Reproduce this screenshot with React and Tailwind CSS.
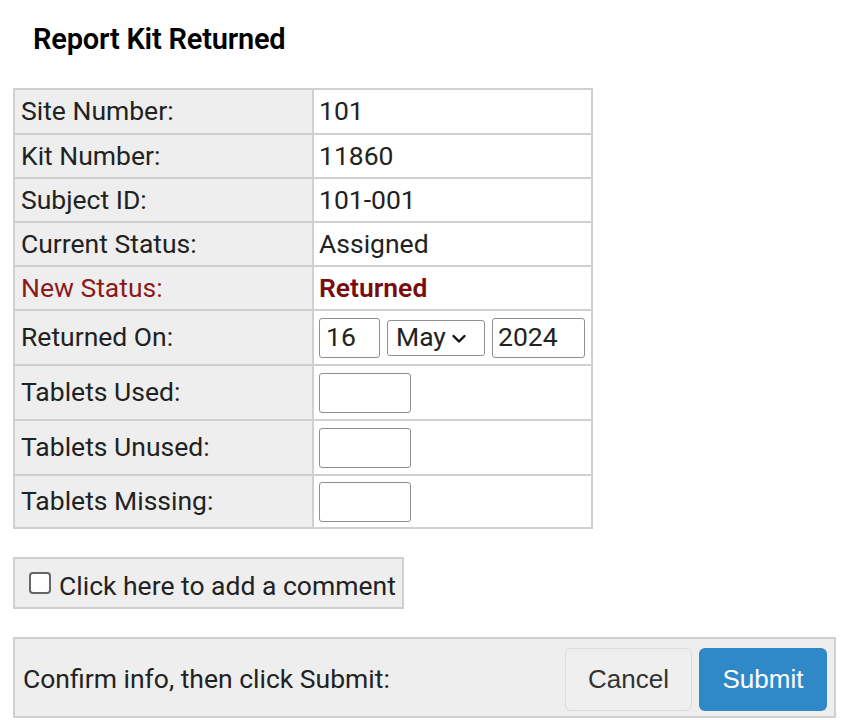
import React from "react";

const rows = [
  { label: "Site Number:", value: "101", h: "h-[45px]" },
  { label: "Kit Number:", value: "11860", h: "h-[44px]" },
  { label: "Subject ID:", value: "101-001", h: "h-[44px]" },
  { label: "Current Status:", value: "Assigned", h: "h-[44px]" },
];

function NumBox() {
  return <div className="w-[92px] h-[40px] border border-[#8f8f8f] rounded-[3px] bg-white" />;
}

export default function App() {
  return (
    <div className="w-[841px] h-[720px] bg-white overflow-hidden text-[#222] font-['Roboto',sans-serif]">
      <div className="pt-[22px] pl-[33px] text-[29px] font-semibold text-black leading-[34px] tracking-[-0.2px]">
        Report Kit Returned
      </div>
      <table className="mt-[32px] ml-[13px] w-[580px] border-collapse text-[26.5px] leading-none">
        <tbody>
          {rows.map((r) => (
            <tr key={r.label} className={r.h}>
              <td className="w-[299px] bg-[#eeeeee] border-2 border-[#d0d0d0] pl-[6px] text-[#222]">{r.label}</td>
              <td className="border-2 border-[#d0d0d0] pl-[5px] text-[#222]">{r.value}</td>
            </tr>
          ))}
          <tr className="h-[44px]">
            <td className="bg-[#eeeeee] border-2 border-[#d0d0d0] pl-[6px] text-[#8b1a1a]">New Status:</td>
            <td className="border-2 border-[#d0d0d0] pl-[5px] text-[#7a0c0c] font-semibold">Returned</td>
          </tr>
          <tr className="h-[55px]">
            <td className="bg-[#eeeeee] border-2 border-[#d0d0d0] pl-[6px]">Returned On:</td>
            <td className="border-2 border-[#d0d0d0] pl-[5px]">
              <div className="flex items-center gap-[7px]">
                <div className="w-[61px] h-[40px] border border-[#8f8f8f] rounded-[3px] flex items-center pl-[6px]">16</div>
                <div className="w-[98px] h-[36px] border border-[#8f8f8f] rounded-[3px] flex items-center pl-[8px] gap-[5px]">
                  <span>May</span>
                  <svg width="16" height="12" viewBox="0 0 16 12" className="mt-[2px]">
                    <path d="M2.5 3 L8 8.5 L13.5 3" stroke="#111" strokeWidth="2.4" fill="none" strokeLinecap="round" strokeLinejoin="round" />
                  </svg>
                </div>
                <div className="w-[93px] h-[40px] border border-[#8f8f8f] rounded-[3px] flex items-center pl-[5px]">2024</div>
              </div>
            </td>
          </tr>
          {[
            ["Tablets Used:", "h-[55px]"],
            ["Tablets Unused:", "h-[55px]"],
            ["Tablets Missing:", "h-[53px]"],
          ].map(([l, h]) => (
            <tr key={l} className={h}>
              <td className="bg-[#eeeeee] border-2 border-[#d0d0d0] pl-[6px]">{l}</td>
              <td className="border-2 border-[#d0d0d0] pl-[5px]">
                <NumBox />
              </td>
            </tr>
          ))}
        </tbody>
      </table>
      <div className="mt-[28px] ml-[13px] w-[391px] h-[52px] bg-[#eeeeee] border-2 border-[#d0d0d0] flex items-center pl-[14px] gap-[8px] text-[26.5px]">
        <div className="w-[22px] h-[22px] border-2 border-[#666] rounded-[4px] bg-white" />
        <span className="text-[#222] mt-[6px]">Click here to add a comment</span>
      </div>
      <div className="mt-[28px] ml-[13px] w-[823px] h-[81px] bg-[#eeeeee] border-2 border-[#d0d0d0] flex items-center pl-[8px] pr-[7px] pt-[3px]">
        <span className="flex-1 text-[26.5px] text-[#222]">Confirm info, then click Submit:</span>
        <div className="flex gap-[7px] font-['Liberation_Sans',sans-serif] text-[26px]">
          <div className="w-[127px] h-[63px] rounded-[6px] border border-[#dcdcdc] bg-[#efefef] flex items-center justify-center text-[#333]">Cancel</div>
          <div className="w-[128px] h-[63px] rounded-[6px] bg-[#2f89c9] flex items-center justify-center text-white">Submit</div>
        </div>
      </div>
    </div>
  );
}
